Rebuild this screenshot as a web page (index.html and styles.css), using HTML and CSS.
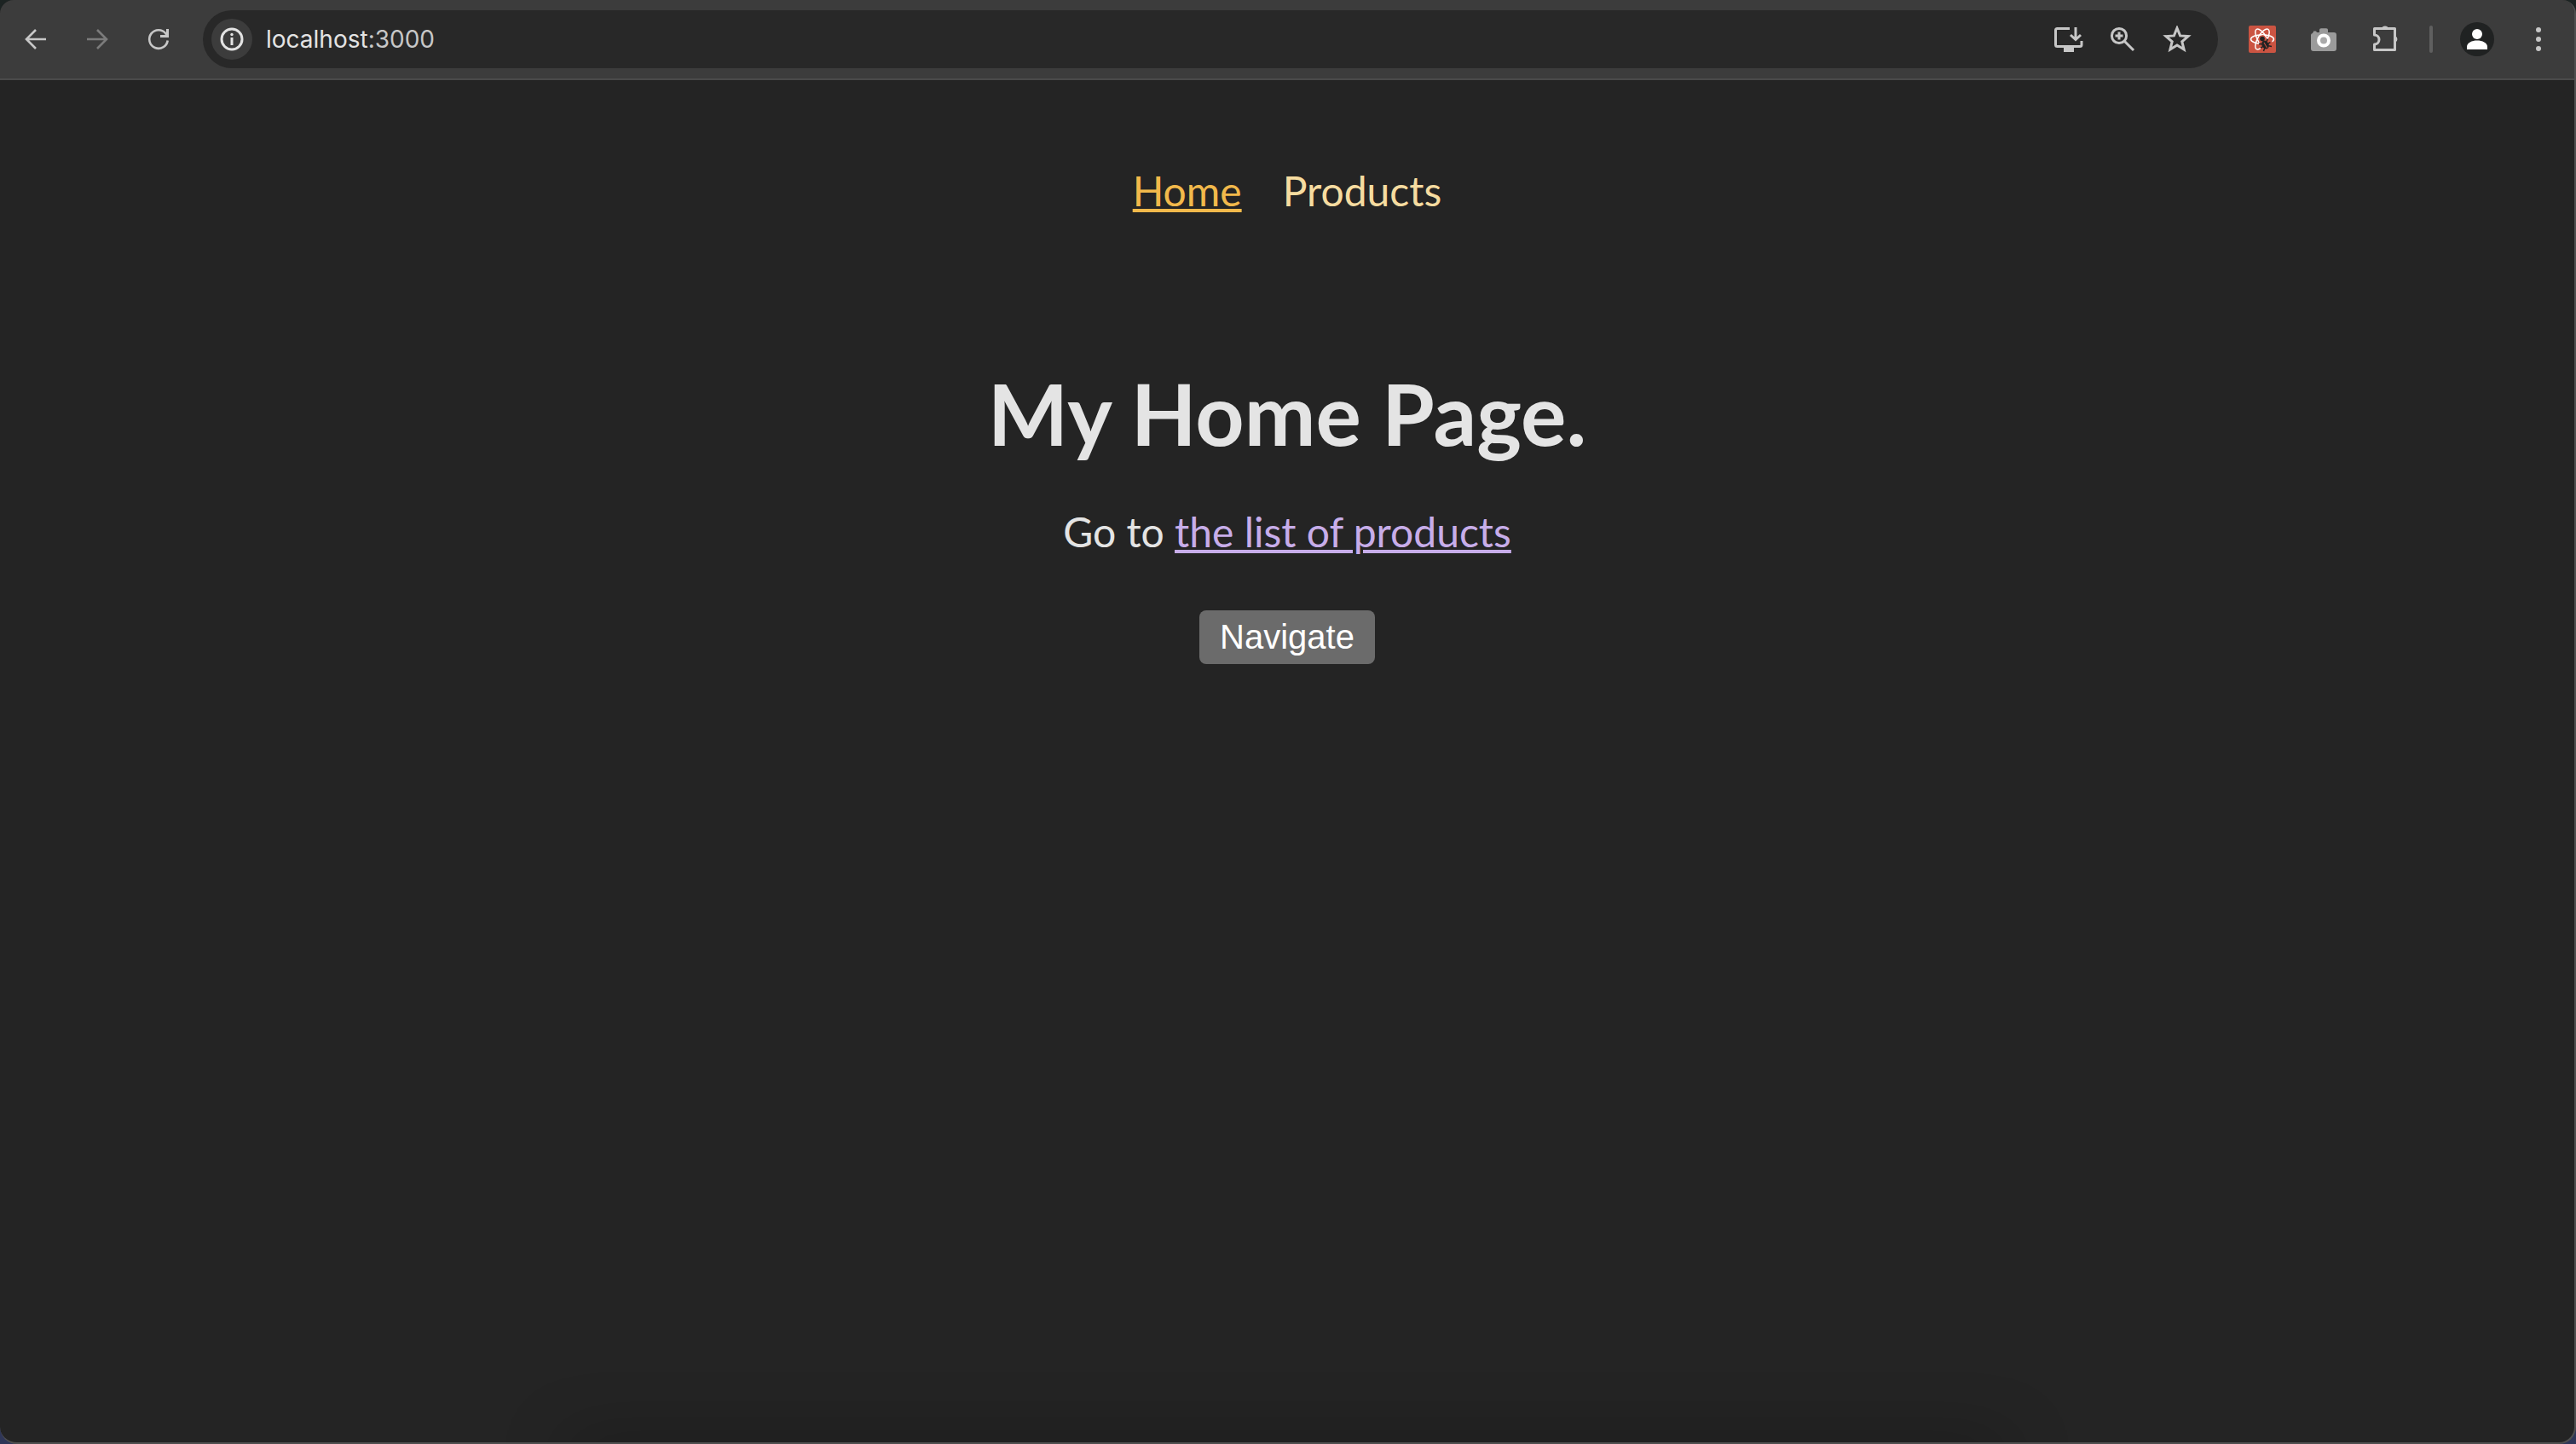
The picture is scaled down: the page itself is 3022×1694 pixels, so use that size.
FILE: index.html
```html
<!DOCTYPE html>
<html lang="en">
<head>
<meta charset="utf-8">
<title>localhost:3000</title>
<link rel="stylesheet" href="styles.css">
</head>
<body>
<div class="window">
  <header class="toolbar">
    <button class="tool" aria-label="Back"><svg class="icon" viewBox="0 0 32 32"><path class="line" d="M28 16H6M16 5L5 16l11 11"/></svg></button>
    <button class="tool tool-disabled" aria-label="Forward"><svg class="icon" viewBox="0 0 32 32"><path class="line" d="M4 16h22M16 5l11 11-11 11"/></svg></button>
    <button class="tool" aria-label="Reload"><svg class="icon" viewBox="0 0 32 32"><path class="line" d="M26.700 17.500A10.800 10.800 0 1 1 24.600 9.500L26 12"/><path class="fill" d="M25 4h3v10H18v-3h7z"/></svg></button>
    <div class="omnibox">
      <button class="site-info" aria-label="Site information"><svg class="icon" viewBox="0 0 32 32"><circle class="ring" cx="16" cy="16" r="12"/><circle class="bright" cx="16" cy="10.500" r="1.700"/><path class="bright" d="M14.500 14h3v9h-3z"/></svg></button>
      <div class="url">localhost<span class="port">:3000</span></div>
      <button class="action" aria-label="Install app"><svg class="icon wide" viewBox="0 0 36 32"><path class="line thick" d="M20 3.500H5.500Q3.500 3.500 3.500 5.500v17q0 2 2 2H32q2 0 2-2V18M27 2v14M21 11l6 5.500 6-5.500"/><path class="fill" d="M13 25h12v6H13z"/></svg></button>
      <button class="action" aria-label="Zoom"><svg class="icon" viewBox="0 0 32 32"><circle class="line thick" cx="12" cy="12" r="8.600"/><path class="line thick" d="M18.500 18.500L29 29M12 7.500v9M7.500 12h9"/></svg></button>
      <button class="action" aria-label="Bookmark this page"><svg class="icon wide" viewBox="0 0 36 32"><path class="line thick" d="M18 3l3.600 8.900 9.400.7-7.200 6.200 2.300 9.200L18 23l-8.100 5 2.300-9.200L5 12.600l9.400-.7z"/></svg></button>
    </div>
    <button class="tool" aria-label="React Developer Tools"><svg class="icon" viewBox="0 0 32 32"><rect width="32" height="32" rx="2" fill="#cb5442"/><g fill="none" stroke="#fff" stroke-width="1.500"><ellipse cx="16" cy="16" rx="13.500" ry="5.300"/><ellipse cx="16" cy="16" rx="13.500" ry="5.300" transform="rotate(60 16 16)"/><ellipse cx="16" cy="16" rx="13.500" ry="5.300" transform="rotate(120 16 16)"/></g><path d="M12 13l5-2 5 5 5 1 2 8-4 6h-9l-3-6z" fill="#cb5442"/><circle cx="16" cy="15.500" r="2.800" fill="#222"/><g transform="rotate(-30 19.500 22.500)"><ellipse cx="19.500" cy="22.500" rx="4" ry="5.200" fill="#222"/><path d="M13.500 18l3 2M25.500 18l-3 2M13 23h13M14 28l3-2.500M25 28l-3-2.500" stroke="#222" stroke-width="1.500"/><path d="M19.500 19.500v7" stroke="#cb5442"/></g></svg></button>
    <button class="tool" aria-label="Screenshot extension"><svg class="icon" viewBox="0 0 32 32"><path d="M3 9q0-1 1-1.500V6.500h3L8 8h3V5q0-1.800 2-1.800h6q2 0 2 1.800v3h7q3 0 3 3v16q0 3-3 3H4q-3 0-3-3V11q0-1.500 2-2z" fill="#9b9b9b"/><circle cx="16" cy="17.500" r="6" fill="#aaa" stroke="#fff" stroke-width="4"/></svg></button>
    <button class="tool" aria-label="Extensions"><svg class="icon" viewBox="0 0 32 32"><path class="line thick" d="M5.500 3.500h22v25h-24V22a5.500 5.500 0 0 0 0-11V3.500z" stroke-linejoin="round"/><path class="fill" d="M12 3a4.500 4.500 0 0 1 8 0zM28 12v8a4.500 4.500 0 0 0 0-8z"/></svg></button>
    <span class="divider"></span>
    <button class="tool" aria-label="Profile"><svg class="avatar" viewBox="0 0 40 40"><circle cx="20" cy="20" r="20" fill="#202222"/><circle cx="20" cy="14" r="6" fill="#fff"/><path d="M8 32v-3c0-10 24-10 24 0v3z" fill="#fff"/></svg></button>
    <button class="tool" aria-label="Menu"><svg class="icon" viewBox="0 0 32 32"><circle class="fill" cx="16" cy="5" r="3"/><circle class="fill" cx="16" cy="16" r="3"/><circle class="fill" cx="16" cy="27" r="3"/></svg></button>
  </header>
  <div class="page">
    <nav>
      <ul class="nav-list">
        <li><a class="nav-link active" href="#">Home</a></li>
        <li><a class="nav-link" href="#products">Products</a></li>
      </ul>
    </nav>
    <main class="content">
      <h1>My Home Page.</h1>
      <p>Go to <a class="text-link" href="#products">the list of products</a></p>
      <button class="navigate">Navigate</button>
    </main>
  </div>
</div>
</body>
</html>
```
FILE: styles.css
```css
* { box-sizing: border-box; }

html { height: 100%; }

body {
  margin: 0;
  min-height: 100%;
  display: flex;
  background: linear-gradient(#1c2322 50%, #2f3658 50%);
  font-family: Lato, sans-serif;
  font-size: 48px;
  font-weight: 400;
  color: #e4e4e4;
}

button {
  margin: 0;
  padding: 0;
  border: 0;
  background: none;
  font: inherit;
  color: inherit;
}

.window {
  position: relative;
  flex: 1;
  display: flex;
  flex-direction: column;
  overflow: hidden;
  border: solid #505050;
  border-width: 0 2px 2px 0;
  border-radius: 16px 16px 20px 20px;
  background: #242424;
}

/* soft shade along the bottom edge */
.window::after {
  content: "";
  position: absolute;
  top: 100%;
  left: 22%;
  right: 22%;
  height: 40px;
  box-shadow: 0 0 80px rgba(0, 0, 0, 0.3);
}

.toolbar {
  display: flex;
  align-items: center;
  padding: 12px 6px;
  background: #3c3c3c;
  border-bottom: 2px solid #4a4a4a;
}

.tool,
.action,
.site-info {
  display: flex;
  align-items: center;
  justify-content: center;
  flex: none;
}

.tool { width: 72px; color: #c7c7c7; }
.tool-disabled { color: #7b7b7b; }
.action { width: 64px; color: #c7c7c7; }

.divider {
  width: 4px;
  height: 32px;
  margin: 0 16px;
  border-radius: 2px;
  background: #5f5f5f;
}

.icon { width: 32px; height: 32px; }
.icon.wide { width: 36px; }
.avatar { width: 40px; height: 40px; }

.line { fill: none; stroke: currentColor; stroke-width: 2.6; }
.thick { stroke-width: 3; }
.fill { fill: currentColor; }
.ring { fill: none; stroke: #e3e3e3; stroke-width: 3; }
.bright { fill: #e3e3e3; }

.omnibox {
  flex: 1;
  display: flex;
  align-items: center;
  height: 68px;
  margin: 0 16px;
  padding: 0 16px 0 10px;
  border-radius: 34px;
  background: #282828;
}

.site-info {
  width: 48px;
  height: 48px;
  border-radius: 24px;
  background: #3c3c3c;
}

.url {
  flex: 1;
  margin-left: 16px;
  font: 400 28px/40px Inter, sans-serif;
  color: #e3e3e3;
}

.port { color: #c7c7c7; }

.page {
  flex: 1;
  padding: 96px 48px;
  text-align: center;
}

.nav-list {
  display: flex;
  justify-content: center;
  gap: 48px;
  margin: 0;
  padding: 0;
  list-style: none;
  line-height: 68px;
}

a { text-decoration-thickness: 4px; text-underline-offset: 3px; }

.nav-link { color: #f6dca0; text-decoration-line: none; }
.nav-link.active { color: #f2b94b; text-decoration-line: underline; }

.content { margin-top: 160px; }

h1 {
  margin: 0;
  font-size: 100px;
  font-weight: 700;
  line-height: 132px;
}

p {
  margin: 40px 0 56px;
  line-height: 68px;
}

.text-link { color: #c7ade9; }

.navigate {
  padding: 8px 24px;
  border-radius: 8px;
  background: #6b6b6b;
  color: #fff;
  font: 400 40px/47px "Liberation Sans", Arial, sans-serif;
}
```
